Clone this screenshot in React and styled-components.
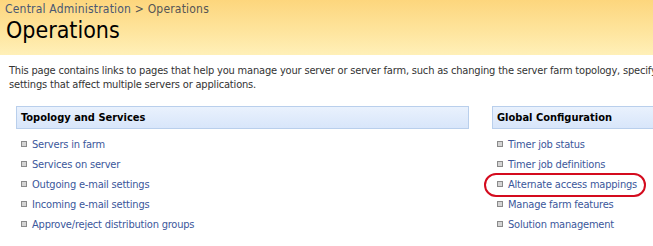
import React from "react";
import styled, { createGlobalStyle } from "styled-components";

const GlobalStyle = createGlobalStyle`
  html, body {
    margin: 0;
    padding: 0;
    overflow: hidden;
    background: #fff;
  }
  body {
    font-family: "DejaVu Sans Condensed", "DejaVu Sans", "Liberation Sans", sans-serif;
    font-size: 11px;
    color: #333;
  }
`;

const Page = styled.div`
  width: 653px;
  height: 246px;
  overflow: hidden;
`;

const TitleBand = styled.div`
  height: 55px;
  box-sizing: border-box;
  padding: 2px 0 0 5px;
  background: linear-gradient(to bottom, #fdd67d 0%, #fee49c 55%, #fff0b8 100%);
`;

const Breadcrumb = styled.div`
  font-size: 12px;
  line-height: 14px;
  color: #555;
  letter-spacing: 0.2px;
  a {
    color: #4a5872;
    text-decoration: none;
  }
`;

const Title = styled.h1`
  margin: 1px 0 0 1px;
  font-size: 23px;
  line-height: 26px;
  font-weight: normal;
  color: #000;
`;

const Intro = styled.p`
  margin: 9px 0 0 9px;
  line-height: 14px;
  white-space: nowrap;
  letter-spacing: -0.18px;
`;

const Columns = styled.div`
  display: grid;
  grid-template-columns: 453px 200px;
  column-gap: 23px;
  margin: 14px 0 0 16px;
`;

const SectionHead = styled.div`
  height: 21px;
  border: 1px solid #b9cfec;
  background: linear-gradient(to bottom, #e9f1fd, #d8e6fa);
  font-weight: bold;
  font-size: 11px;
  line-height: 21px;
  color: #000;
  padding-left: ${(p) => p.$indent}px;
`;

const LinkList = styled.ul`
  list-style: none;
  margin: 5px 0 0 0;
  padding: 0 0 0 5px;
`;

const LinkItem = styled.li`
  position: relative;
  display: flex;
  align-items: center;
  gap: 5px;
  height: 20px;
`;

const Bullet = styled.span`
  width: 4px;
  height: 4px;
  border: 1px solid #8a8a8a;
  background: #d4d4d4;
  flex: none;
`;

const Link = styled.a`
  color: #3b579b;
  text-decoration: none;
  letter-spacing: -0.2px;
`;

const Highlight = styled.span`
  position: absolute;
  left: -13px;
  top: -1px;
  width: 158px;
  height: 20px;
  border: 2px solid #d40b1e;
  border-radius: 12px;
  pointer-events: none;
`;

const topology = [
  "Servers in farm",
  "Services on server",
  "Outgoing e-mail settings",
  "Incoming e-mail settings",
  "Approve/reject distribution groups",
];

const globalConfig = [
  "Timer job status",
  "Timer job definitions",
  "Alternate access mappings",
  "Manage farm features",
  "Solution management",
];

function Section({ title, links, indent, marked }) {
  return (
    <div>
      <SectionHead $indent={indent}>{title}</SectionHead>
      <LinkList>
        {links.map((text) => (
          <LinkItem key={text}>
            <Bullet />
            <Link href="#">{text}</Link>
            {text === marked && <Highlight />}
          </LinkItem>
        ))}
      </LinkList>
    </div>
  );
}

export default function App() {
  return (
    <Page>
      <GlobalStyle />
      <TitleBand>
        <Breadcrumb>
          <a href="#">Central Administration</a> &gt; Operations
        </Breadcrumb>
        <Title>Operations</Title>
      </TitleBand>
      <Intro>
        This page contains links to pages that help you manage your server or server farm, such as changing the server farm topology, specifying
        <br />
        settings that affect multiple servers or applications.
      </Intro>
      <Columns>
        <Section title="Topology and Services" links={topology} indent={4} />
        <Section
          title="Global Configuration"
          links={globalConfig}
          indent={4}
          marked="Alternate access mappings"
        />
      </Columns>
    </Page>
  );
}
